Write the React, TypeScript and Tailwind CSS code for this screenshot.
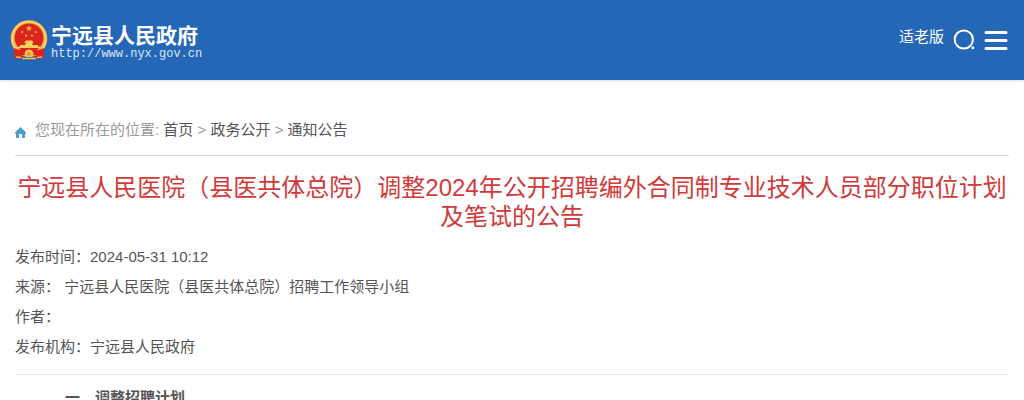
const crumbs = [
  { label: '首页', href: '#home' },
  { label: '政务公开', href: '#zwgk' },
  { label: '通知公告', href: '#tzgg' },
];

const metaRows = [
  { label: '发布时间：', value: '2024-05-31 10:12' },
  { label: '来源：', value: ' 宁远县人民医院（县医共体总院）招聘工作领导小组' },
  { label: '作者：', value: '' },
  { label: '发布机构：', value: '宁远县人民政府' },
];

const STAR = 'M0 -1 L0.24 -0.32 L0.95 -0.31 L0.38 0.12 L0.59 0.81 L0 0.4 L-0.59 0.81 L-0.38 0.12 L-0.95 -0.31 L-0.24 -0.32 Z';

function Emblem() {
  return (
    <svg viewBox="0 0 38 41" className="h-[41px] w-[38px] shrink-0" aria-hidden="true">
      <path d="M4 27 L4 37 L9 39 L13 37 H25 L29 39 L34 37 L34 27 Z" fill="#d8251d" />
      <circle cx="19" cy="18.5" r="18.3" fill="#efb945" />
      <circle cx="19" cy="18.5" r="16.8" fill="none" stroke="#f9d978" strokeWidth="1.2" />
      <circle cx="19" cy="17.8" r="14.4" fill="#dc241c" />
      <path d={STAR} transform="translate(19 8.5) scale(3.4)" fill="#f6c84c" />
      <path d={STAR} transform="translate(12.2 12) scale(1.6)" fill="#f6c84c" />
      <path d={STAR} transform="translate(16 15.5) scale(1.6)" fill="#f6c84c" />
      <path d={STAR} transform="translate(22 15.5) scale(1.6)" fill="#f6c84c" />
      <path d={STAR} transform="translate(25.8 12) scale(1.6)" fill="#f6c84c" />
      <path d="M14.5 22 L16 20.5 H22 L23.5 22 L23 23 H22.5 V25 H28 V26.5 H30 V28 H8 V26.5 H10 V25 H15.5 V23 H15 Z" fill="#f8d25c" />
      <path d="M4 28 Q10 31 14 29.5 L16 33 H22 L24 29.5 Q28 31 34 28 L33 34 Q27 36 23 35 L19 37 L15 35 Q11 36 5 34 Z" fill="#dc241c" />
      <path d="M14.5 34 A4.5 4.5 0 0 1 23.5 34 L22 37 H16 Z" fill="#f3c150" />
      <circle cx="19" cy="34" r="2" fill="#e39a32" />
      <path d="M6 37 L11 37.5 M32 37 L27 37.5 M12 38.5 H26" stroke="#f3c150" strokeWidth="1.3" />
    </svg>
  );
}

function HomeIcon() {
  return (
    <svg viewBox="0 0 11 11" className="mt-3 h-[11px] w-[11px] shrink-0" aria-hidden="true">
      <path d="M5.5 0 L11 5.5 V6.5 H10 V11 H7 V7 H4 V11 H1 V6.5 H0 V5.5 Z" fill="#4f9bcb" />
    </svg>
  );
}

function Header() {
  return (
    <header className="flex h-20 items-center justify-between bg-[#2467b7] pr-4 pl-[10px] text-white shadow-sm">
      <a href="#home" className="flex items-center gap-[3px]">
        <Emblem />
        <span className="flex flex-col pt-[3px]">
          <span className="text-[21px] leading-6 font-bold">宁远县人民政府</span>
          <span className="font-['Liberation_Mono',monospace] text-[12px] leading-3 text-[#dbe8f6]">http://www.nyx.gov.cn</span>
        </span>
      </a>
      <div className="flex items-center gap-2">
        <a href="#elder" className="pb-[6px] text-[15px] leading-6">适老版</a>
        <button type="button" aria-label="搜索">
          <svg viewBox="0 0 24 24" className="h-6 w-6" fill="none">
            <circle cx="11.8" cy="11.5" r="9.1" stroke="#fff" strokeWidth="2" />
            <circle cx="20.8" cy="19.8" r="1.5" fill="#fff" />
          </svg>
        </button>
        <button type="button" aria-label="菜单">
          <svg viewBox="0 0 24 24" className="h-6 w-6" stroke="#fff" strokeWidth="3" strokeLinecap="round">
            <path d="M2 4.5 H22 M2 12.5 H22 M2 20.5 H22" />
          </svg>
        </button>
      </div>
    </header>
  );
}

export default function App() {
  return (
    <div className="bg-white font-['Liberation_Sans','Noto_Sans_CJK_SC',sans-serif] text-[15px] text-[#555]">
      <Header />
      <main className="px-[15px] pt-[30px]">
        <nav aria-label="您现在所在的位置" className="flex gap-[9px] border-b border-[#ddd] pt-[5px] pb-[10px] leading-[30px]">
          <HomeIcon />
          <p className="text-[#999]">
            您现在所在的位置:{' '}
            {crumbs.map((crumb, i) => (
              <span key={crumb.label}>
                {i > 0 && ' > '}
                <a href={crumb.href} className="text-[#555]">{crumb.label}</a>
              </span>
            ))}
          </p>
        </nav>

        <article>
          <h1 className="pt-[17px] pb-[11px] text-center text-[24px] leading-[29px] text-[#d13a3a]">
            宁远县人民医院（县医共体总院）调整2024年公开招聘编外合同制专业技术人员部分职位计划及笔试的公告
          </h1>
          <ul className="border-b border-[#e8e8e8] pb-3 leading-[30px]">
            {metaRows.map((row) => (
              <li key={row.label}>
                {row.label}
                {row.value}
              </li>
            ))}
          </ul>
          <h2 className="px-[50px] pt-2 leading-[30px] font-bold">一、调整招聘计划</h2>
        </article>
      </main>
    </div>
  );
}
